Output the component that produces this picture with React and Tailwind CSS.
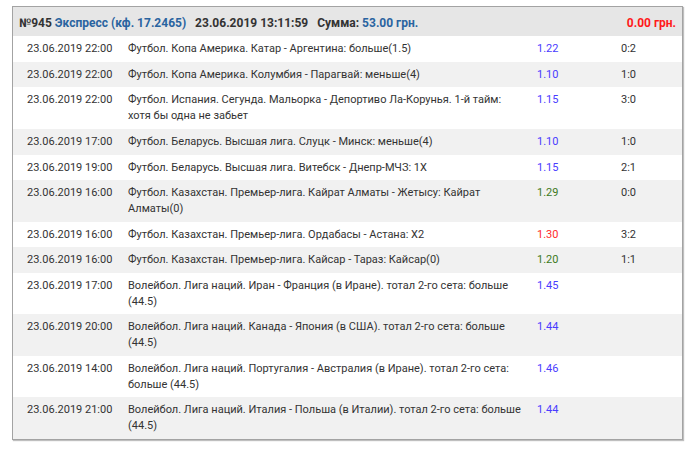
const rows = [
  { date: '23.06.2019 22:00', event: 'Футбол. Копа Америка. Катар - Аргентина: больше(1.5)', odds: '1.22', tone: 'blue', score: '0:2' },
  { date: '23.06.2019 22:00', event: 'Футбол. Копа Америка. Колумбия - Парагвай: меньше(4)', odds: '1.10', tone: 'blue', score: '1:0' },
  { date: '23.06.2019 22:00', event: 'Футбол. Испания. Сегунда. Мальорка - Депортиво Ла-Корунья. 1-й тайм: хотя бы одна не забьет', odds: '1.15', tone: 'blue', score: '3:0' },
  { date: '23.06.2019 17:00', event: 'Футбол. Беларусь. Высшая лига. Слуцк - Минск: меньше(4)', odds: '1.10', tone: 'blue', score: '1:0' },
  { date: '23.06.2019 19:00', event: 'Футбол. Беларусь. Высшая лига. Витебск - Днепр-МЧЗ: 1X', odds: '1.15', tone: 'blue', score: '2:1' },
  { date: '23.06.2019 16:00', event: 'Футбол. Казахстан. Премьер-лига. Кайрат Алматы - Жетысу: Кайрат Алматы(0)', odds: '1.29', tone: 'green', score: '0:0' },
  { date: '23.06.2019 16:00', event: 'Футбол. Казахстан. Премьер-лига. Ордабасы - Астана: X2', odds: '1.30', tone: 'red', score: '3:2' },
  { date: '23.06.2019 16:00', event: 'Футбол. Казахстан. Премьер-лига. Кайсар - Тараз: Кайсар(0)', odds: '1.20', tone: 'green', score: '1:1' },
  { date: '23.06.2019 17:00', event: 'Волейбол. Лига наций. Иран - Франция (в Иране). тотал 2-го сета: больше (44.5)', odds: '1.45', tone: 'blue', score: '' },
  { date: '23.06.2019 20:00', event: 'Волейбол. Лига наций. Канада - Япония (в США). тотал 2-го сета: больше (44.5)', odds: '1.44', tone: 'blue', score: '' },
  { date: '23.06.2019 14:00', event: 'Волейбол. Лига наций. Португалия - Австралия (в Иране). тотал 2-го сета: больше (44.5)', odds: '1.46', tone: 'blue', score: '' },
  { date: '23.06.2019 21:00', event: 'Волейбол. Лига наций. Италия - Польша (в Италии). тотал 2-го сета: больше (44.5)', odds: '1.44', tone: 'blue', score: '' },
];

const toneClass = {
  blue: 'text-[#4a3cff]',
  green: 'text-[#3d7a1c]',
  red: 'text-[#ff2a2a]',
};

export default function App() {
  return (
    <div className="min-h-[450px] bg-white pt-[6px] pl-[12px] pr-[7px] font-['Roboto',sans-serif] text-[11px] text-[#333]">
      <div className="border border-[#a3a3a3] shadow-[1px_1px_1px_rgba(0,0,0,0.25)]">
        {/* Header */}
        <div className="flex items-center justify-between bg-[#e6e6e6] h-[29px] pl-[6px] pr-[6px] pt-[2px] text-[12px] font-bold">
          <div className="flex gap-[9px]">
            <span>
              №945 <span className="text-[#2a64a0]">Экспресс (кф. 17.2465)</span>
            </span>
            <span>23.06.2019 13:11:59</span>
            <span>
              Сумма: <span className="text-[#2a64a0]">53.00 грн.</span>
            </span>
          </div>
          <span className="text-[#ff1a1a]">0.00 грн.</span>
        </div>

        {rows.map((r, i) => (
          <div
            key={i}
            className={`grid grid-cols-[115px_409px_84px_1fr] py-[5px] leading-[15.7px] ${i % 2 ? 'bg-[#f1f1f1]' : 'bg-white'}`}
          >
            <div className="pl-[14px]">{r.date}</div>
            <div className="pr-[12px]">{r.event}</div>
            <div className={toneClass[r.tone]}>{r.odds}</div>
            <div>{r.score}</div>
          </div>
        ))}
      </div>
    </div>
  );
}
